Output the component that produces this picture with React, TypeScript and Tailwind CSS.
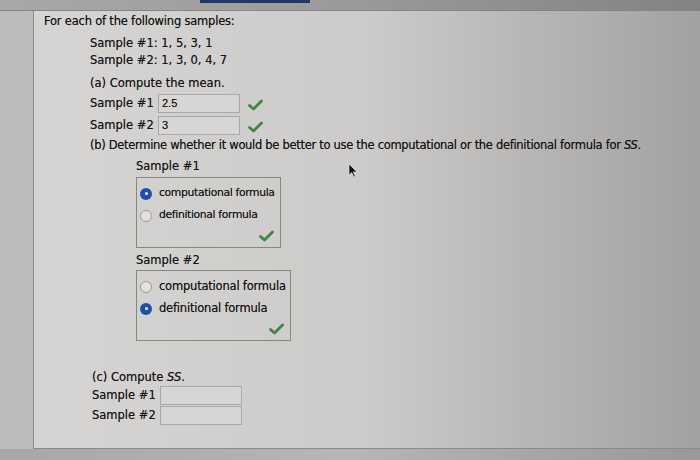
import React from "react";

const Check = () => (
  <svg width="15" height="12" viewBox="0 0 15 12" className="shrink-0">
    <path d="M1.5 6.5 L5.5 10 L13.5 2" fill="none" stroke="#3a8a3e" strokeWidth="2.8" strokeLinecap="round" strokeLinejoin="round" />
  </svg>
);

const Radio = ({ on }: { on?: boolean }) =>
  on ? (
    <span className="flex h-[12px] w-[12px] shrink-0 items-center justify-center rounded-full bg-[#1d4fae]">
      <span className="h-[3px] w-[3px] rounded-full bg-white" />
    </span>
  ) : (
    <span className="h-[12px] w-[12px] shrink-0 rounded-full border border-[#9a9898] bg-[#e4e2e0]" />
  );

const InputRow = ({ label, value, done }: { label: string; value?: string; done?: boolean }) => (
  <div className="flex h-[19px] items-center">
    <span className="w-[68px]">{label}</span>
    <div className="flex h-[19px] w-[82px] items-center border border-[#aaa8a6] bg-[#d8d6d4] px-[3px] font-['Liberation_Sans',sans-serif] text-[11px]">
      {value}
    </div>
    {done && (
      <span className="ml-[8px] mt-[3px]">
        <Check />
      </span>
    )}
  </div>
);

const Choice = ({ first, box }: { first: boolean; box: string }) => (
  <div className={`flex h-[71px] flex-col whitespace-nowrap border border-[#7f8b7b] px-[3px] ${box}`}>
    <div className="mt-[9px] flex h-[13px] items-center gap-[7px]">
      <Radio on={first} />
      <span>computational formula</span>
    </div>
    <div className="mt-[9px] flex h-[13px] items-center gap-[7px]">
      <Radio on={!first} />
      <span>definitional formula</span>
    </div>
    <div className="mt-auto mb-[5px] flex justify-end pr-[3px]">
      <Check />
    </div>
  </div>
);

export default function App() {
  return (
    <div className="relative flex h-[460px] w-[700px] flex-col overflow-hidden bg-[#b4b2b0] font-['DejaVu_Sans',sans-serif] text-[11.5px] text-[#141414] [text-shadow:0_0_0.5px_rgba(0,0,0,0.55)]">
      {/* top bar */}
      <div className="relative h-[11px] shrink-0 border-b border-[#858386] bg-linear-to-r from-[#a9a7a9] via-[#9c999c] to-[#858286]">
        <div className="absolute left-[200px] top-0 h-[3px] w-[110px] bg-[#1e3a64]" />
      </div>

      <div className="flex h-[438px] shrink-0">
        <div className="w-[33px] shrink-0 bg-[#bdbbb9]" />
        <div className="flex-1 border-b border-l border-[#8c8a8a] bg-linear-to-r from-[#d7d5d3] via-[#cdcbc9] to-[#a3a1a1] pl-[10px] pt-[2px]">
          <div className="flex h-[18px] items-center tracking-[-0.2px]">For each of the following samples:</div>

          <div className="ml-[46px]">
            <div className="mt-[4px] flex h-[17px] items-center">Sample #1: 1, 5, 3, 1</div>
            <div className="flex h-[17px] items-center">Sample #2: 1, 3, 0, 4, 7</div>

            <div className="mt-[6px] flex h-[18px] items-center">(a) Compute the mean.</div>
            <div className="mt-px">
              <InputRow label="Sample #1" value="2.5" done />
            </div>
            <div className="mt-[3px]">
              <InputRow label="Sample #2" value="3" done />
            </div>

            <div className="mt-[2px] flex h-[18px] items-center whitespace-nowrap tracking-[-0.3px]">
              (b) Determine whether it would be better to use the computational or the definitional formula for&nbsp;<i>SS</i>.
            </div>

            <div className="ml-[46px]">
              <div className="mt-[3px] flex h-[18px] items-center">Sample #1</div>
              <div className="mt-px">
                <Choice first box="w-[145px] text-[10.8px] tracking-[-0.35px]" />
              </div>
              <div className="mt-[4px] flex h-[18px] items-center">Sample #2</div>
              <Choice first={false} box="w-[155px] tracking-[-0.2px]" />
            </div>

            <div className="ml-[2px]">
              <div className="mt-[28px] flex h-[18px] items-center">
                (c) Compute&nbsp;<i>SS</i>.
              </div>
              <div className="-mt-px">
                <InputRow label="Sample #1" />
              </div>
              <div className="mt-px">
                <InputRow label="Sample #2" />
              </div>
            </div>
          </div>
        </div>
      </div>

      <div className="flex-1 bg-linear-to-r from-[#a9a7a5] via-[#b8b6b4] to-[#9a9898]" />

      {/* mouse cursor */}
      <svg className="absolute left-[348px] top-[163px]" width="10" height="15" viewBox="0 0 10 15">
        <path d="M1 1 L1 12 L3.8 9.5 L5.8 14 L7.3 13.3 L5.4 8.9 L9 8.9 Z" fill="#111" stroke="#eee" strokeWidth="0.6" />
      </svg>
    </div>
  );
}
